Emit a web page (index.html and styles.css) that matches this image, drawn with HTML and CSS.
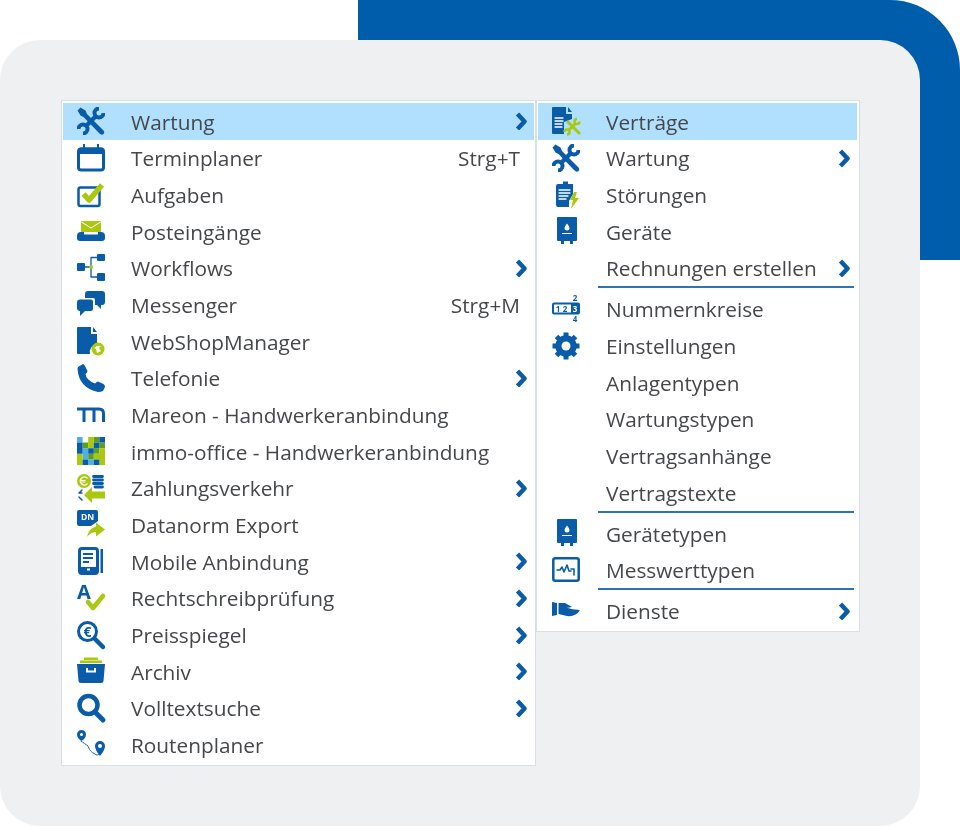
FILE: index.html
```html
<!DOCTYPE html>
<html lang="de">
<head>
<meta charset="utf-8">
<title>Menü</title>
<link rel="stylesheet" href="styles.css">
</head>
<body>
<svg class="defs" width="0" height="0" aria-hidden="true">
  <symbol id="tools" viewBox="0 0 28 28">
    <path d="M0.500 3.500L3.500 0.500L8.500 3.500L10 7L26.500 23.500Q28 25.500 26.500 27Q24.500 28.500 22.500 26.500L6.500 10L3.500 8.500Z" class="f b"/>
    <path d="M8 20L20 8" class="st b butt" stroke-width="4.500"/>
    <path d="M26.500 6A4.500 4.500 0 1 1 22 1.500" class="st b butt" stroke-width="4"/>
    <path d="M1.500 22A4.500 4.500 0 1 1 6 26.500" class="st b butt" stroke-width="4"/>
  </symbol>
  <symbol id="boiler" viewBox="0 0 28 28">
    <path d="M5 1Q5 0 6 0H24Q25 0 25 1V23Q25 24 24 24H21V27H18V24H12V27H9V24H6Q5 24 5 23Z" class="f b"/>
    <path d="M15 6.500Q17.500 9.500 17.500 11A2.500 2.500 0 0 1 12.500 11Q12.500 9.500 15 6.500Z" class="f w"/>
    <path d="M10 16H20V17H10Z" class="f w"/>
  </symbol>
  <symbol id="chev" viewBox="0 0 13 18">
    <path d="M2.500 2L9.500 9.500L2.500 17" class="st b butt" stroke-width="4.500" stroke-linejoin="miter"/>
  </symbol>
</svg>

<div class="accent"></div>
<main class="card">
  <nav class="menu menu-main">
    <div class="row active">
      <svg class="icon"><use href="#tools"/></svg>
      <span class="label">Wartung</span>
      <svg class="chev"><use href="#chev"/></svg>
    </div>
    <div class="row">
      <svg class="icon" viewBox="0 0 28 28">
        <rect x="1.500" y="5" width="25" height="21" rx="2.500" class="st b" stroke-width="3"/>
        <path d="M1 7Q1 3.500 4 3.500H24Q27 3.500 27 7V10H1Z" class="f b"/>
        <path d="M6 0H8V5H6ZM20 0H22V5H20Z" class="f b"/>
      </svg>
      <span class="label">Terminplaner</span>
      <span class="key">Strg+T</span>
    </div>
    <div class="row">
      <svg class="icon" viewBox="0 0 28 28">
        <rect x="1.500" y="6.500" width="21" height="18.500" rx="2" class="st b" stroke-width="2.500"/>
        <path d="M6.500 13L12 19L25 4" class="st g butt" stroke-width="5.500"/>
      </svg>
      <span class="label">Aufgaben</span>
    </div>
    <div class="row">
      <svg class="icon" viewBox="0 0 28 28">
        <path d="M4 4H24V15H4Z" class="f g"/>
        <path d="M4.500 5L14 11L23.500 5" class="st w" stroke-width="1"/>
        <path d="M0 19Q0 15 4 15H7V17.500H21V15H24Q28 15 28 19V21Q28 24 25 24H3Q0 24 0 21Z" class="f b"/>
      </svg>
      <span class="label">Posteingänge</span>
    </div>
    <div class="row">
      <svg class="icon" viewBox="0 0 28 28">
        <path d="M7 13H14M21 3.500H14V23H21" class="st b" stroke-width="1.300"/>
        <rect x="0" y="9" width="8" height="8" rx="1" class="f b"/>
        <rect x="20" y="0" width="8" height="7" rx="1" class="f b"/>
        <rect x="20" y="19" width="8" height="8" rx="1" class="f b"/>
        <circle cx="14" cy="13" r="2" class="f g"/>
      </svg>
      <span class="label">Workflows</span>
      <svg class="chev"><use href="#chev"/></svg>
    </div>
    <div class="row">
      <svg class="icon" viewBox="0 0 28 28">
        <path d="M11 0H25Q28 0 28 3V11Q28 14 25 14H24V18L20 14H18V9Q18 7 16 7H8V3Q8 0 11 0Z" class="f b"/>
        <path d="M3 8.500H14Q16 8.500 16 10.500V18Q16 20 14 20H8L3 25V20Q0 20 0 17V11.500Q0 8.500 3 8.500Z" class="f b"/>
      </svg>
      <span class="label">Messenger</span>
      <span class="key">Strg+M</span>
    </div>
    <div class="row">
      <svg class="icon" viewBox="0 0 28 28">
        <path d="M1 0H14V7H20V17A8 8 0 0 0 13 27H1Q0 27 0 26V1Q0 0 1 0Z" class="f b"/>
        <path d="M16 0L20 5H16Z" class="f b"/>
        <circle cx="21" cy="22" r="6.500" class="f g"/>
        <path d="M17 21Q20 18 24 19L22 21L24 24L20 26L19 22Z" class="f w"/>
      </svg>
      <span class="label">WebShopManager</span>
    </div>
    <div class="row">
      <svg class="icon" viewBox="0 0 28 28">
        <path d="M1 3L6 0Q7 0 8 2L10.500 7Q10.500 8.500 8.500 10Q9 16 18 19.500Q20 17.500 21 17.500L26.500 20Q28 21 28 23L26 27Q24 28 21 28Q2 24 0.500 5Z" class="f b"/>
      </svg>
      <span class="label">Telefonie</span>
      <svg class="chev"><use href="#chev"/></svg>
    </div>
    <div class="row">
      <svg class="icon" viewBox="0 0 28 28">
        <path d="M0 8H22Q26.500 8 26.500 12.500V21M7 8V21M17 8V21" class="st b butt" stroke-width="3"/>
      </svg>
      <span class="label">Mareon - Handwerkeranbindung</span>
    </div>
    <div class="row">
      <svg class="icon" viewBox="0 0 28 28">
        <path d="M0 0h5.600v5.600H0zM5.600 11.200h5.600v5.600H5.600zM5.600 16.800h5.600v5.600H5.600zM11.200 22.400h5.600V28H11.200z" class="f l"/>
        <path d="M16.800 0h5.600v5.600h-5.600zM5.600 5.600h5.600v5.600H5.600zM22.400 5.600H28v5.600h-5.600zM16.800 11.200h5.600v5.600h-5.600zM11.200 16.800h5.600v5.600h-5.600z" class="f dg"/>
        <path d="M11.200 0h5.600v5.600h-5.600zM11.200 5.600h5.600v5.600h-5.600zM22.400 11.200H28v5.600h-5.600zM0 16.800h5.600v5.600H0zM0 22.400h5.600V28H0zM16.800 16.800H28v5.600H16.800zM22.400 22.400H28V28h-5.600z" class="f g"/>
        <path d="M22.400 0H28v5.600h-5.600zM0 5.600h5.600v5.600H0zM16.800 5.600h5.600v5.600h-5.600zM0 11.200h5.600v5.600H0zM11.200 11.200h5.600v5.600h-5.600zM5.600 22.400h5.600V28H5.600zM16.800 22.400h5.600V28h-5.600z" class="f b"/>
      </svg>
      <span class="label">immo-office - Handwerkeranbindung</span>
    </div>
    <div class="row">
      <svg class="icon" viewBox="0 0 28 28">
        <circle cx="7" cy="7" r="7" class="f g"/>
        <path d="M10 4A4 4 0 1 0 10 10" class="st w" stroke-width="1.500"/>
        <path d="M4 6.500H8M4 8H8" class="st w" stroke-width="1"/>
        <path d="M16.500 2.500H25.500M16.500 6H25.500M16.500 9.500H25.500M18 13H25.500" class="st b" stroke-width="2.800"/>
        <path d="M5 16L2 19H5M2 23L5 26" class="st b" stroke-width="1.500" stroke-dasharray="2 1"/>
        <path d="M7 21L15 13V17.500H28V24.500H15V29Z" class="f g"/>
      </svg>
      <span class="label">Zahlungsverkehr</span>
      <svg class="chev"><use href="#chev"/></svg>
    </div>
    <div class="row">
      <svg class="icon" viewBox="0 0 28 28">
        <path d="M2 -1H19Q21 -1 21 1V10L14 15H2Q0 15 0 13V1Q0 -1 2 -1Z" class="f b"/>
        <text x="10.500" y="9" class="tiny">DN</text>
        <path d="M10 26Q11 18 19 15.500V11.500L28 18.500L19 25.500V21Q14 21 10 26Z" class="f g"/>
      </svg>
      <span class="label">Datanorm Export</span>
    </div>
    <div class="row">
      <svg class="icon" viewBox="0 0 28 28">
        <rect x="2.500" y="1.500" width="18" height="25" rx="2.500" class="st b" stroke-width="3"/>
        <path d="M6 6H16V8H6ZM6 10H16V12H6ZM6 14H12V16H6ZM4 20H19V25H4Z" class="f b"/>
        <path d="M10 21.500H13V23.500H10Z" class="f w"/>
        <path d="M23.500 2H26V26H23.500Z" class="f b"/>
      </svg>
      <span class="label">Mobile Anbindung</span>
      <svg class="chev"><use href="#chev"/></svg>
    </div>
    <div class="row">
      <svg class="icon" viewBox="0 0 28 28">
        <text x="0" y="15" class="big-a">A</text>
        <path d="M11 18L16 24L26 12" class="st g" stroke-width="4.500"/>
      </svg>
      <span class="label">Rechtschreibprüfung</span>
      <svg class="chev"><use href="#chev"/></svg>
    </div>
    <div class="row">
      <svg class="icon" viewBox="0 0 28 28">
        <circle cx="10.500" cy="10.500" r="9" class="st b" stroke-width="3"/>
        <path d="M18 18L26 26" class="st b" stroke-width="4.500"/>
        <text x="10.500" y="15.500" class="euro">€</text>
      </svg>
      <span class="label">Preisspiegel</span>
      <svg class="chev"><use href="#chev"/></svg>
    </div>
    <div class="row">
      <svg class="icon" viewBox="0 0 28 28">
        <path d="M7 0.500H21V3H7ZM3 3.500H25V6H3Z" class="f g"/>
        <path d="M0 7H28L26.500 24Q26.500 26 24 26H4Q1.500 26 1.500 24ZM9 11V15.500H19V11H17V13.500H11V11Z" class="f b" fill-rule="evenodd"/>
      </svg>
      <span class="label">Archiv</span>
      <svg class="chev"><use href="#chev"/></svg>
    </div>
    <div class="row">
      <svg class="icon" viewBox="0 0 28 28">
        <circle cx="11.500" cy="11" r="9" class="st b" stroke-width="4.500"/>
        <path d="M18 18L26 26" class="st b" stroke-width="5"/>
      </svg>
      <span class="label">Volltextsuche</span>
      <svg class="chev"><use href="#chev"/></svg>
    </div>
    <div class="row">
      <svg class="icon" viewBox="0 0 28 28">
        <path d="M4 11L11 16Q13 22 18 24Q20 26 22 24" class="st b" stroke-width="1" stroke-dasharray="1.500 1"/>
        <path d="M4.500 0A4.500 4.500 0 0 1 9 4.500Q9 8 4.500 11Q0 8 0 4.500A4.500 4.500 0 0 1 4.500 0ZM4.500 3A1.500 1.500 0 1 0 4.500 6A1.500 1.500 0 1 0 4.500 3Z" class="f b" fill-rule="evenodd"/>
        <path d="M23 11A5 5 0 0 1 28 16Q28 20 23 26Q18 20 18 16A5 5 0 0 1 23 11ZM23 14A2 2 0 1 0 23 18A2 2 0 1 0 23 14Z" class="f b" fill-rule="evenodd"/>
      </svg>
      <span class="label">Routenplaner</span>
    </div>
  </nav>

  <nav class="menu menu-sub">
    <div class="row active">
      <svg class="icon" viewBox="0 0 28 28">
        <path d="M1 0H14V7H20V12L12 15V27H1Q0 27 0 26V1Q0 0 1 0Z" class="f b"/>
        <path d="M16 0L20 5H16Z" class="f b"/>
        <path d="M3 11H11M3 14H11M3 17H10M3 20H10" class="st w" stroke-width="1.300"/>
        <path d="M15 14L28 27" class="st g butt" stroke-width="3"/>
        <path d="M16 24L24 16" class="st g butt" stroke-width="3"/>
        <path d="M27.500 14.500A2.500 2.500 0 1 1 25 12" class="st g butt" stroke-width="2.500"/>
        <path d="M12.500 25A2.500 2.500 0 1 1 15 27.500" class="st g butt" stroke-width="2.500"/>
      </svg>
      <span class="label">Verträge</span>
    </div>
    <div class="row">
      <svg class="icon"><use href="#tools"/></svg>
      <span class="label">Wartung</span>
      <svg class="chev"><use href="#chev"/></svg>
    </div>
    <div class="row">
      <svg class="icon" viewBox="0 0 28 28">
        <path d="M6 3H11V0.500H16V3H21V13L17 20V26H6Q4 26 4 24V5Q4 3 6 3Z" class="f b"/>
        <path d="M7 9H18M7 12H18M7 15H16M7 18H14" class="st w" stroke-width="1.300"/>
        <path d="M22 11L18 19H21L19 28L27 17H23L25 11Z" class="f g"/>
      </svg>
      <span class="label">Störungen</span>
    </div>
    <div class="row">
      <svg class="icon"><use href="#boiler"/></svg>
      <span class="label">Geräte</span>
    </div>
    <div class="row">
      <span class="icon"></span>
      <span class="label">Rechnungen erstellen</span>
      <svg class="chev"><use href="#chev"/></svg>
    </div>
    <div class="sep"></div>
    <div class="row">
      <svg class="icon" viewBox="0 0 28 28">
        <text x="23" y="6" class="num">2</text>
        <rect x="1" y="8.500" width="26" height="10" rx="1" class="st b" stroke-width="2"/>
        <path d="M19 8H27V19H19Z" class="f b"/>
        <text x="6" y="16.500" class="num">1</text>
        <text x="13" y="16.500" class="num">2</text>
        <text x="23" y="16.500" class="num num-w">3</text>
        <text x="23" y="27" class="num">4</text>
      </svg>
      <span class="label">Nummernkreise</span>
    </div>
    <div class="row">
      <svg class="icon" viewBox="0 0 28 28">
        <circle cx="14" cy="14" r="8" class="st b" stroke-width="5.500"/>
        <path d="M14 0.500V27.500M0.500 14H27.500M4.500 4.500L23.500 23.500M23.500 4.500L4.500 23.500" class="st b butt" stroke-width="5"/>
        <circle cx="14" cy="14" r="4.500" class="f w"/>
      </svg>
      <span class="label">Einstellungen</span>
    </div>
    <div class="row">
      <span class="icon"></span>
      <span class="label">Anlagentypen</span>
    </div>
    <div class="row">
      <span class="icon"></span>
      <span class="label">Wartungstypen</span>
    </div>
    <div class="row">
      <span class="icon"></span>
      <span class="label">Vertragsanhänge</span>
    </div>
    <div class="row">
      <span class="icon"></span>
      <span class="label">Vertragstexte</span>
    </div>
    <div class="sep"></div>
    <div class="row">
      <svg class="icon"><use href="#boiler"/></svg>
      <span class="label">Gerätetypen</span>
    </div>
    <div class="row">
      <svg class="icon" viewBox="0 0 28 28">
        <rect x="1.300" y="2.300" width="25.400" height="22.400" rx="2" class="st b" stroke-width="2.500"/>
        <path d="M5 14H8L10 11L12 16L15 9L17 15H19M19 13H22V19" class="st b" stroke-width="1.600"/>
      </svg>
      <span class="label">Messwerttypen</span>
    </div>
    <div class="sep"></div>
    <div class="row">
      <svg class="icon" viewBox="0 0 28 28">
        <path d="M0 5L5 6V18L0 19Z" class="f b"/>
        <path d="M6.500 6L13 6L20 10Q16 11 14 10.500Q20 12.500 28 13Q24 20 15 19L6.500 17Z" class="f b"/>
      </svg>
      <span class="label">Dienste</span>
      <svg class="chev"><use href="#chev"/></svg>
    </div>
  </nav>
</main>
</body>
</html>
```

FILE: styles.css
```css
* {
  box-sizing: border-box;
}

html,
body {
  margin: 0;
  padding: 0;
  background: #ffffff;
}

body {
  position: relative;
  width: 960px;
  height: 827px;
  overflow: hidden;
  font-family: "Open Sans", "Liberation Sans", sans-serif;
  color: #45474a;
}

.defs {
  position: absolute;
}

.accent {
  position: absolute;
  top: 0;
  left: 358px;
  width: 602px;
  height: 260px;
  background: #005dac;
  border-top-right-radius: 70px;
}

.card {
  position: relative;
  display: flex;
  align-items: flex-start;
  width: 920px;
  height: 786px;
  margin-top: 40px;
  padding: 60px 0 0 61px;
  background: #eef0f2;
  border-radius: 40px;
}

.menu {
  background: #ffffff;
  border: 1px solid #d8e0e7;
  filter: blur(0.3px);
}

.menu-main {
  width: 475px;
  padding: 2px 1px;
}

.menu-sub {
  width: 324px;
  padding: 2px 2px 2px 1px;
}

.row {
  display: flex;
  align-items: center;
  height: 36.67px;
  padding: 0 6px 0 14px;
  font-size: 20.8px;
  white-space: nowrap;
}

.active {
  background: #b0e0fe;
}

.icon {
  flex: none;
  width: 28px;
  height: 28px;
  margin-right: 26px;
  overflow: visible;
}

.label {
  flex: 1;
  padding-top: 1px;
}

.key {
  margin-right: 8px;
  padding-top: 1px;
}

.chev {
  flex: none;
  width: 13px;
  height: 18px;
}

.sep {
  height: 2px;
  margin: 0 3px 2.300px 60px;
  background: #2f74b2;
}

.f {
  stroke: none;
}

.st {
  fill: none;
  stroke-linecap: round;
  stroke-linejoin: round;
}

.st.butt {
  stroke-linecap: butt;
}

.f.b { fill: #0a5ca8; }
.f.g { fill: #a9c80f; }
.f.w { fill: #ffffff; }
.f.l { fill: #4fb0e6; }
.f.dg { fill: #5e9e1e; }
.st.b { stroke: #0a5ca8; }
.st.g { stroke: #a9c80f; }
.st.w { stroke: #ffffff; }

.tiny,
.num,
.euro,
.big-a {
  font-family: "Open Sans", "Liberation Sans", sans-serif;
  font-weight: 700;
  text-anchor: middle;
  fill: #0a5ca8;
}

.tiny {
  font-size: 8.500px;
  fill: #ffffff;
}

.num {
  font-size: 8px;
}

.num-w {
  fill: #ffffff;
}

.euro {
  font-size: 14px;
}

.big-a {
  font-size: 20px;
  text-anchor: start;
}
```
